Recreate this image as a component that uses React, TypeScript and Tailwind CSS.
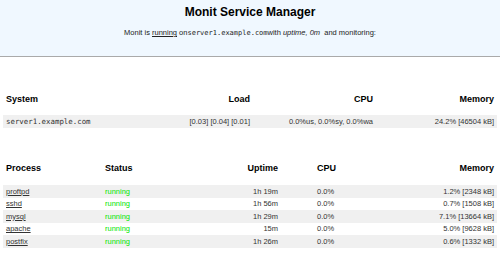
import React from 'react';

const sans = { fontFamily: '"Liberation Sans", Arial, sans-serif' };

const processes = [
    { name: 'proftpd', uptime: '1h 19m', cpu: '0.0%', mem: '1.2% [2348 kB]' },
    { name: 'sshd', uptime: '1h 56m', cpu: '0.0%', mem: '0.7% [1508 kB]' },
    { name: 'mysql', uptime: '1h 29m', cpu: '0.0%', mem: '7.1% [13664 kB]' },
    { name: 'apache', uptime: '15m', cpu: '0.0%', mem: '5.0% [9628 kB]' },
    { name: 'postfix', uptime: '1h 26m', cpu: '0.0%', mem: '0.6% [1332 kB]' },
];

export default function App() {
    return (
        <div className="w-[500px] h-[254px] bg-white text-black overflow-hidden" style={sans}>
            <div className="h-[57px] bg-[#f0f8ff] border-b border-[#aaaaaa] flex flex-col items-center">
                <h1 className="mt-[5px] text-[12px] leading-[14px] font-bold">Monit Service Manager</h1>
                <p className="mt-[9px] text-[7.5px] leading-[10px] text-[#222]">
                    Monit is <span className="underline">running</span> on
                    <span className="font-['DejaVu_Sans_Mono',monospace] text-[7px]">server1.example.com</span>
                    with <i>uptime, 0m</i>&nbsp; and monitoring:
                </p>
            </div>

            <div className="mx-[3px] mt-[36px]">
                <div className="grid grid-cols-[127px_123px_123px_1fr] h-[14px] items-center text-[9px] font-bold">
                    <div className="pl-[3px]">System</div>
                    <div className="text-right pr-[3px]">Load</div>
                    <div className="text-right pr-[3px]">CPU</div>
                    <div className="text-right pr-[3px]">Memory</div>
                </div>
                <div className="mt-[8px] grid grid-cols-[127px_123px_123px_1fr] h-[13px] items-center bg-[#f0f0f0] text-[7.5px] text-[#333]">
                    <div className="pl-[3px] font-['DejaVu_Sans_Mono',monospace] text-[7.4px]">server1.example.com</div>
                    <div className="text-right pr-[3px]">[0.03] [0.04] [0.01]</div>
                    <div className="text-right pr-[3px]">0.0%us, 0.0%sy, 0.0%wa</div>
                    <div className="text-right pr-[3px]">24.2% [46504 kB]</div>
                </div>

                <div className="mt-[34px] grid grid-cols-[99px_98px_81px_1fr_1fr] h-[14px] items-center text-[9px] font-bold">
                    <div className="pl-[3px]">Process</div>
                    <div className="pl-[3px]">Status</div>
                    <div className="text-right pr-[3px]">Uptime</div>
                    <div className="pl-[36px]">CPU</div>
                    <div className="text-right pr-[3px]">Memory</div>
                </div>
                <div className="mt-[9px]">
                    {processes.map((p, i) => (
                        <div
                            key={p.name}
                            className={`grid grid-cols-[99px_98px_81px_1fr_1fr] h-[12.5px] items-center text-[7.5px] text-[#333] ${i % 2 === 0 ? 'bg-[#f0f0f0]' : ''}`}
                        >
                            <div className="pl-[3px] underline">{p.name}</div>
                            <div className="pl-[3px] text-[#00e600]">running</div>
                            <div className="text-right pr-[3px]">{p.uptime}</div>
                            <div className="pl-[36px]">{p.cpu}</div>
                            <div className="text-right pr-[3px]">{p.mem}</div>
                        </div>
                    ))}
                </div>
            </div>
        </div>
    );
}
